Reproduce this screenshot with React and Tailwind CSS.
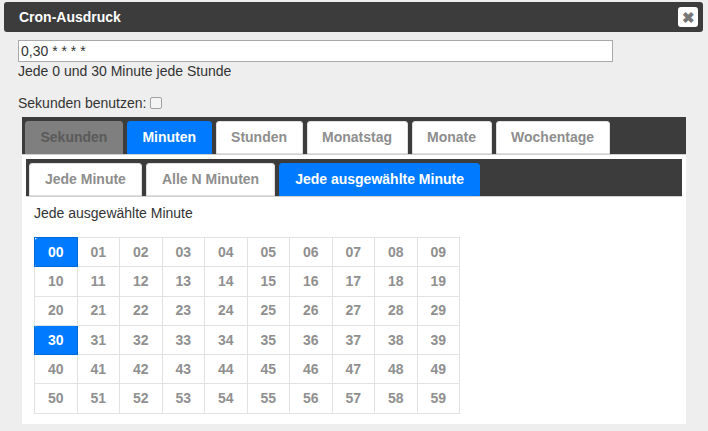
import React, { useState } from "react";

const MAIN_TABS = ["Sekunden", "Minuten", "Stunden", "Monatstag", "Monate", "Wochentage"];
const SUB_TABS = ["Jede Minute", "Alle N Minuten", "Jede ausgewählte Minute"];

function pad(n) {
  return n < 10 ? "0" + n : "" + n;
}

export default function App() {
  const [selected, setSelected] = useState([0, 30]);

  const toggle = (m) => {
    setSelected((prev) => (prev.includes(m) ? prev.filter((x) => x !== m) : [...prev, m]));
  };

  const rows = [0, 1, 2, 3, 4, 5];

  return (
    <div
      className="w-[708px] h-[431px] bg-[#eeeeee] overflow-hidden text-[14px] text-[#333]"
      style={{ fontFamily: '"Liberation Sans", Arial, sans-serif' }}
    >
      {/* title bar */}
      <div className="mx-[4px] mt-[2px] h-[30px] w-[699px] rounded-[3px] bg-[#3c3c3c] flex items-center justify-between pl-[15px] pr-[5px]">
        <span className="font-bold text-white">Cron-Ausdruck</span>
        <button className="w-[20px] h-[20px] rounded-[3px] bg-white flex items-center justify-center text-[#777] font-bold text-[15px] leading-none">
          ✖
        </button>
      </div>

      <div className="pl-[18px] pt-[8px]">
        <div className="w-[595px] h-[22px] border border-[#a9a9a9] bg-white pl-[2px] leading-[20px]">
          0,30 * * * *
        </div>
        <div className="mt-[1px] leading-[16px]">Jede 0 und 30 Minute jede Stunde</div>
        <div className="mt-[16px] leading-[16px] flex items-center">
          Sekunden benutzen:
          <span className="ml-[4px] w-[12px] h-[12px] rounded-[2px] border border-[#a0a0a0] bg-[#f4f4f4]" />
        </div>
      </div>

      {/* main panel */}
      <div className="ml-[22px] mt-[6px] w-[664px]">
        <div className="bg-[#3c3c3c] pt-[4px] pl-[3px] flex gap-[4px] border-b border-[#cfcfcf]">
          {MAIN_TABS.map((t) => {
            const cls =
              t === "Sekunden"
                ? "bg-[#7f7f7f] text-[#5a5a5a] border-[#7f7f7f]"
                : t === "Minuten"
                ? "bg-[#007bff] text-white border-[#007bff]"
                : "bg-white text-[#8e8e8e] border-[#e0e0e0]";
            return (
              <div
                key={t}
                className={`h-[33px] px-[14.5px] border rounded-t-[3px] font-bold flex items-center ${cls}`}
              >
                {t}
              </div>
            );
          })}
        </div>

        <div className="bg-white px-[4px] pt-[4px] pb-[10px]">
          <div className="bg-[#3c3c3c] pt-[4px] pl-[3px] flex gap-[4px] border-b border-[#cfcfcf]">
            {SUB_TABS.map((t, i) => (
              <div
                key={t}
                className={`h-[33px] px-[15px] border rounded-t-[3px] font-bold flex items-center ${
                  i === 2 ? "bg-[#007bff] text-white border-[#007bff]" : "bg-white text-[#8e8e8e] border-[#e0e0e0]"
                }`}
              >
                {t}
              </div>
            ))}
          </div>

          <div className="pl-[8px]">
            <div className="mt-[8px] leading-[16px]">Jede ausgewählte Minute</div>
            <table className="mt-[16px] w-[426px] border-collapse">
              <tbody>
                {rows.map((r) => (
                  <tr key={r} className="h-[29.3px]">
                    {Array.from({ length: 10 }, (_, c) => {
                      const m = r * 10 + c;
                      const on = selected.includes(m);
                      return (
                        <td
                          key={c}
                          onClick={() => toggle(m)}
                          className={`w-[42.6px] p-0 text-center font-bold cursor-pointer border ${
                            on
                              ? "bg-[#007bff] text-white border-[#0067d8] rounded-l-[3px]"
                              : "bg-white text-[#909090] border-[#e2e2e2]"
                          }`}
                        >
                          {pad(m)}
                        </td>
                      );
                    })}
                  </tr>
                ))}
              </tbody>
            </table>
          </div>
        </div>
      </div>
    </div>
  );
}
